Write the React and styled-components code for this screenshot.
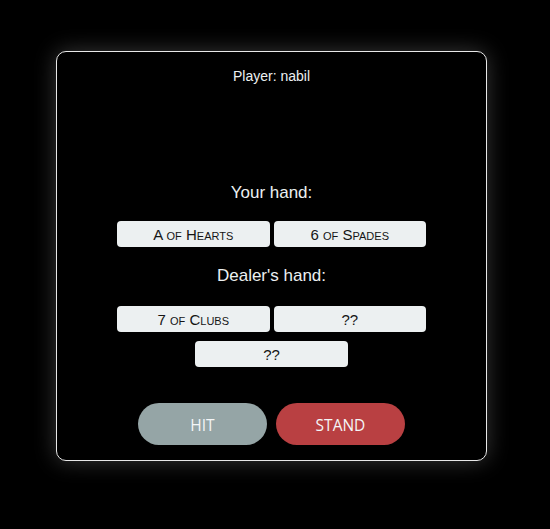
import styled, { createGlobalStyle } from "styled-components";

const GlobalStyle = createGlobalStyle`
  html, body {
    margin: 0;
    padding: 0;
    background-color: #000;
  }
  body {
    font-family: "Liberation Sans", Arial, sans-serif;
    color: #ecf0f1;
  }
`;

const Page = styled.div`
  padding: 51px 0 0 56px;
  min-height: 529px;
  box-sizing: border-box;
`;

const Table = styled.div`
  width: 431px;
  height: 410px;
  box-sizing: border-box;
  border: 1px solid #e8e8e8;
  border-radius: 10px;
  box-shadow: 0 0 22px rgba(255, 255, 255, 0.22);
  background-color: #000;
  display: flex;
  flex-direction: column;
  align-items: center;
  padding-top: 16px;
`;

const PlayerName = styled.div`
  font-size: 14px;
  line-height: 16px;
  margin-bottom: 99px;
`;

const HandTitle = styled.div`
  font-size: 17px;
  line-height: 20px;
  margin-bottom: ${(props) => props.gap}px;
`;

const CardRow = styled.div`
  width: 309px;
  display: flex;
  flex-wrap: wrap;
  justify-content: center;
  column-gap: 4px;
  row-gap: 9px;
  margin-bottom: ${(props) => props.gap}px;
`;

const Card = styled.div`
  width: 152.5px;
  height: 26px;
  border-radius: 4px;
  background-color: #ecf0f1;
  color: #151515;
  font-size: 15px;
  font-variant: small-caps;
  display: flex;
  align-items: center;
  justify-content: center;
`;

const Controls = styled.div`
  display: flex;
  gap: 9px;
`;

const ActionButton = styled.button`
  width: 129px;
  height: 42px;
  border: none;
  border-radius: 21px;
  background-color: ${(props) => (props.danger ? "#b94042" : "#95a5a6")};
  color: #f4f6f7;
  font-family: "Open Sans", sans-serif;
  font-size: 15.5px;
  padding-top: 2px;
  cursor: pointer;
`;

const playerHand = ["A of Hearts", "6 of Spades"];
const dealerHand = ["7 of Clubs", "??", "??"];

const App = () => {
  return (
    <Page>
      <GlobalStyle />
      <Table>
        <PlayerName>Player: nabil</PlayerName>
        <HandTitle gap={18}>Your hand:</HandTitle>
        <CardRow gap={19}>
          {playerHand.map((c, i) => (
            <Card key={i}>{c}</Card>
          ))}
        </CardRow>
        <HandTitle gap={20}>Dealer's hand:</HandTitle>
        <CardRow gap={36}>
          {dealerHand.map((c, i) => (
            <Card key={i}>{c}</Card>
          ))}
        </CardRow>
        <Controls>
          <ActionButton>HIT</ActionButton>
          <ActionButton danger>STAND</ActionButton>
        </Controls>
      </Table>
    </Page>
  );
};

export default App;
